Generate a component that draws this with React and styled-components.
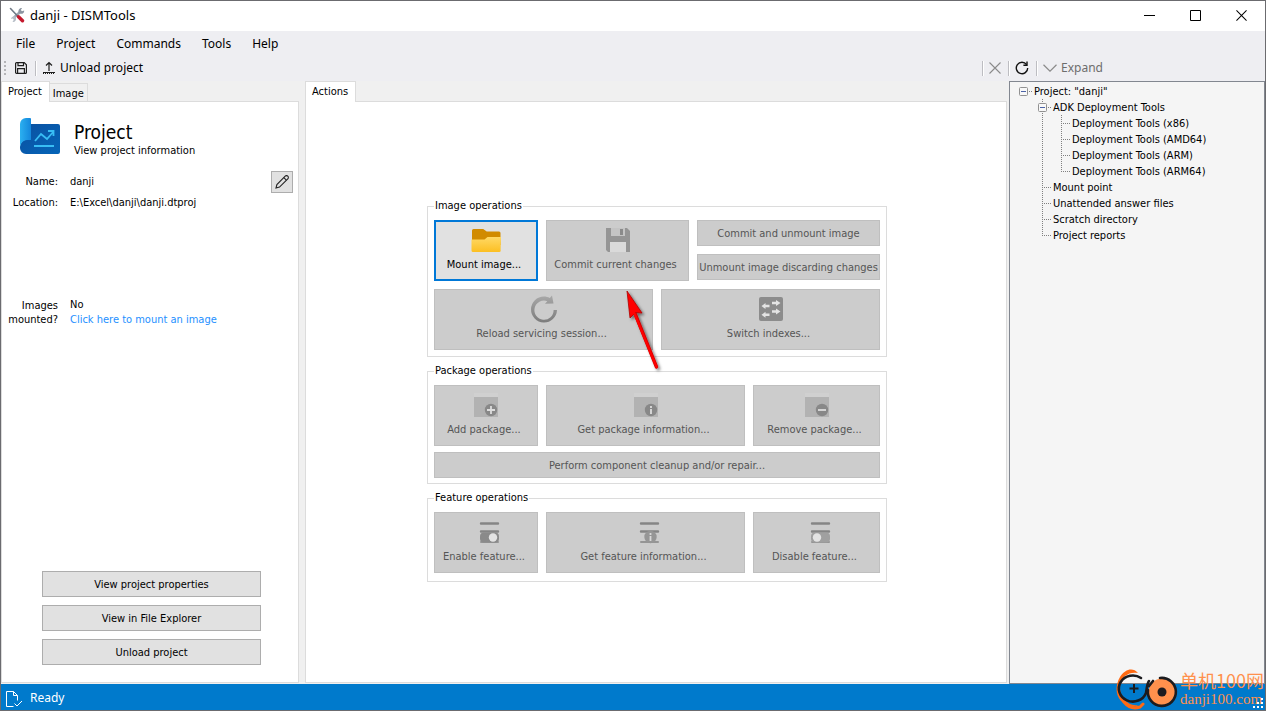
import React from 'react'
import styled, { createGlobalStyle, css } from 'styled-components'

const GlobalStyle = createGlobalStyle`
  * {
    box-sizing: border-box;
  }
  body {
    margin: 0;
    font-family: 'DejaVu Sans Condensed', 'DejaVu Sans', sans-serif;
    font-size: 11px;
    line-height: 14px;
    color: #000000;
  }
  button {
    font: inherit;
    color: inherit;
  }
`

const Window = styled.div`
  display: flex;
  flex-direction: column;
  position: relative;
  height: 100vh;
  overflow: hidden;
  background-color: #f0f0f0;
  border: 1px solid #6b6b6f;
`

const uiFont = css`
  font-family: 'Noto Sans', 'Noto Sans CJK SC', sans-serif;
  font-size: 12px;
  line-height: 16px;
`

const TitleBar = styled.header`
  ${uiFont}
  display: flex;
  height: 30px;
  padding: 0 1px 2px 8px;
  background-color: #ffffff;

  > svg {
    align-self: center;
  }
`

const Title = styled.h1`
  flex: 1;
  align-self: center;
  margin: 0 0 0 5px;
  font-size: 13px;
  font-weight: normal;
`

const CaptionButton = styled.button`
  display: flex;
  align-items: center;
  justify-content: center;
  width: 46px;
  padding: 0;
  border: none;
  background: none;
`

const MenuBar = styled.nav`
  ${uiFont}
  display: flex;
  gap: 1px;
  height: 26px;
  padding-left: 5px;
  background-color: #eeeef2;
`

const MenuItem = styled.button`
  padding: 0 10px;
  border: none;
  background: none;
`

const ToolBars = styled.div`
  ${uiFont}
  display: flex;
  height: 24px;
  background-color: #eeeef2;
`

const ToolBar = styled.div`
  display: flex;
  align-items: center;
  flex: ${(props) => (props.$width ? 'none' : 1)};
  width: ${(props) => props.$width || 'auto'};
  padding-bottom: 2px;
`

const ToolButton = styled.button`
  display: flex;
  align-items: center;
  gap: 4px;
  padding: 0 5px;
  border: none;
  background: none;
  white-space: nowrap;
  color: ${(props) => (props.disabled ? '#6d6d6d' : '#000000')};
`

const Separator = styled.span`
  width: 2px;
  height: 15px;
  margin-left: 2px;
  border-left: 1px solid #bdbdc2;
  background-color: #ffffff;
`

const Grip = styled.span`
  width: 2px;
  height: 14px;
  margin: 0 3px;
  background: repeating-linear-gradient(#b4b4b8 0 2px, transparent 2px 4px);
`

const Spacer = styled.span`
  flex: 1;
`

const Body = styled.main`
  display: flex;
  flex: 1;
  min-height: 0;
`

const TabPane = styled.section`
  display: flex;
  flex-direction: column;
  flex: ${(props) => (props.$width ? 'none' : 1)};
  width: ${(props) => props.$width || 'auto'};
  min-width: 0;
  margin-right: ${(props) => props.$gap};
  padding-bottom: 1px;
`

const TabStrip = styled.div`
  display: flex;
  align-items: flex-end;
  height: 20px;
`

const Tab = styled.button`
  height: ${(props) => (props.$active ? '21px' : '18px')};
  margin-bottom: ${(props) => (props.$active ? '-1px' : '0')};
  padding: ${(props) => (props.$active ? '0 7px 0 6px' : '2px 3px 0')};
  border: 1px solid #dcdcdc;
  border-bottom: none;
  border-left-width: ${(props) => (props.$active ? '1px' : '0')};
  background-color: ${(props) => (props.$active ? '#ffffff' : '#f0f0f0')};
  z-index: 1;
`

const TabPage = styled.div`
  display: flex;
  flex-direction: column;
  flex: 1;
  min-height: 0;
  border: 1px solid #dcdcdc;
  background-color: #ffffff;
`

const ProjectHeader = styled.div`
  display: flex;
  align-items: flex-start;
  gap: 14px;
  padding: 16px 18px 0;
`

const ProjectTitle = styled.h2`
  margin: 3px 0 1px;
  font-size: 19px;
  line-height: 22px;
  font-weight: normal;
`

const Details = styled.dl`
  display: grid;
  grid-template-columns: 56px 1fr 22px;
  gap: 3px 12px;
  align-items: center;
  margin: ${(props) => props.$top} 5px 0 0;
`

const Term = styled.dt`
  text-align: right;
`

const Value = styled.dd`
  margin: 0;
  grid-column: ${(props) => (props.$wide ? 'span 2' : 'auto')};
`

const MountLink = styled.a`
  display: block;
  margin-top: 1px;
  color: #1e90ff;
  text-decoration: none;
`

const Button = styled.button`
  height: 26px;
  padding: 1px 0 0;
  border: 1px solid #adadad;
  background-color: #e1e1e1;
  white-space: nowrap;

  &:disabled {
    border-color: #bfbfbf;
    background-color: #cccccc;
    color: #555555;
  }
`

const EditButton = styled(Button)`
  display: flex;
  align-items: center;
  justify-content: center;
  height: 22px;
  padding: 0;
`

const ProjectButtons = styled.div`
  display: flex;
  flex-direction: column;
  gap: 8px;
  margin: auto 37px 17px 40px;
`

const Operations = styled.div`
  position: relative;
  display: flex;
  flex-direction: column;
  gap: 7px;
  width: 462px;
  margin: auto;
  padding: 0 0 3px 2px;
`

const Group = styled.fieldset`
  margin: 0;
  padding: 7px 6px ${(props) => props.$bottom || '6px'};
  border: 1px solid #dcdcdc;
`

const Legend = styled.legend`
  padding: 0 1px;
`

const ButtonRow = styled.div`
  display: grid;
  grid-template-columns: ${(props) => props.$columns};
  gap: 8px;
  margin-top: ${(props) => props.$top || '0'};

  > * {
    min-width: 0;
  }
`

const ButtonStack = styled.div`
  display: flex;
  flex-direction: column;
  gap: 8px;
`

const BigButton = styled(Button)`
  display: flex;
  flex-direction: column;
  align-items: center;
  justify-content: space-between;
  height: 61px;
  padding: 4px 4px 8px 0;
  outline: ${(props) => (props.$focused ? '1px solid #0078d7' : 'none')};
  outline-offset: -2px;
  border-color: ${(props) => (props.$focused ? '#0078d7' : '#adadad')};

  svg {
    margin-left: 4px;
  }
`

const Arrow = styled.svg`
  position: absolute;
  left: 194px;
  top: 86px;
  pointer-events: none;
`

const Tree = styled.ul`
  flex: none;
  width: 256px;
  margin: 0;
  padding: 1px 0 0 4px;
  border: 1px solid #828790;
  background-color: #f5f5f5;
  list-style: none;
`

const TreeRow = styled.li`
  display: flex;
  align-items: center;
  height: 16px;
  white-space: nowrap;
`

const TreeLabel = styled.span`
  padding: 1px 0 0 1px;
`

const dots = (direction) =>
  `repeating-linear-gradient(${direction}, #808080 0 1px, transparent 1px 2px)`

const guides = {
  none: 'none',
  line: `${dots('to bottom')} 9px 0 / 1px 16px no-repeat`,
  tee: `${dots('to bottom')} 9px 0 / 1px 16px no-repeat, ${dots('to right')} 9px 8px / 9px 1px no-repeat`,
  elbow: `${dots('to bottom')} 9px 0 / 1px 8px no-repeat, ${dots('to right')} 9px 8px / 9px 1px no-repeat`,
  root: `${dots('to right')} 15px 8px / 3px 1px no-repeat`,
}

const Guide = styled.span`
  display: flex;
  align-items: center;
  justify-content: center;
  width: 19px;
  height: 16px;
  background: ${(props) => guides[props.$kind]};
`

const StatusBar = styled.footer`
  ${uiFont}
  display: flex;
  align-items: center;
  gap: 6px;
  height: 26px;
  padding: 2px 0 0 5px;
  background-color: #007acc;
  color: #ffffff;
`

const Watermark = styled.div`
  position: absolute;
  right: 1px;
  bottom: -2px;
  display: flex;
  align-items: center;
  gap: 2px;
  color: #ff914d;
`

const WatermarkText = styled.div`
  font-family: 'Liberation Serif', 'Noto Sans CJK SC', serif;
  font-size: 15px;
  line-height: 19px;
`

const WatermarkName = styled.div`
  font-family: 'Noto Sans CJK SC', sans-serif;
  font-size: 18px;
`

const SizeGrip = styled.svg`
  position: absolute;
  right: 2px;
  bottom: 2px;
`

const AppIcon = () => (
  <svg width="16" height="16" viewBox="0 0 16 16" fill="none">
    <path d="m5 10.500 5.500-5" stroke="#9aa4af" strokeWidth="2.400" />
    <path d="M9.500 5.500c-.6-2.600 1.200-4.700 3.600-4.500l-1.300 2L13 4.300l2.200-.9c.2 2.500-2 4-4 3.300z" fill="#8b95a1" />
    <path d="M6.500 9.500c-2-.8-4 .3-4.500 2.500l1.800-.5 1 1.300L3.500 15c2.500.3 4-1.800 3.500-4z" fill="#b4bcc5" />
    <path d="m1.500 1.500 7.500 8" stroke="#6f7985" strokeWidth="1.600" strokeLinecap="round" />
    <path d="m9.500 9.700 4 4" stroke="#c4182c" strokeWidth="3.400" strokeLinecap="round" />
  </svg>
)

const SaveIcon = () => (
  <svg width="14" height="14" viewBox="0 0 14 14" fill="none" stroke="#1e1e1e" strokeWidth="1.200">
    <path d="M1.600 2.600a1 1 0 0 1 1-1h7.600l2.200 2.200v7.600a1 1 0 0 1-1 1H2.600a1 1 0 0 1-1-1z" />
    <path d="M4 1.600v3h5.500v-3M3.600 12.400V7.600h6.800v4.800" />
  </svg>
)

const UnloadIcon = () => (
  <svg width="14" height="14" viewBox="0 0 14 14" fill="none" stroke="#1e1e1e">
    <path d="M7 10V1.500M4 4.500l3-3 3 3" strokeWidth="1.200" />
    <path d="M1 11.500h12" />
    <path d="M1 12.500h12" strokeDasharray="1 1" />
  </svg>
)

const CrossIcon = ({ size, color }) => (
  <svg width={size} height={size} viewBox="0 0 12 12" fill="none" stroke={color} strokeWidth="1.100">
    <path d="m.5.5 11 11m0-11-11 11" />
  </svg>
)

const RefreshIcon = () => (
  <svg width="14" height="14" viewBox="0 0 14 14" fill="none" stroke="#111111" strokeWidth="1.400">
    <path d="M11.600 3.600A5.700 5.700 0 1 0 12.700 7" />
    <path d="M12 .6v3.600H8.400" />
  </svg>
)

const ChevronIcon = () => (
  <svg width="14" height="8" viewBox="0 0 14 8" fill="none" stroke="#8a8a8a" strokeWidth="1.200">
    <path d="m.5.8 6.500 6.400L13.500.8" />
  </svg>
)

const ProjectIcon = () => (
  <svg width="40" height="36" viewBox="0 0 40 36">
    <defs>
      <linearGradient id="sheet" x1="0" y1="0" x2="1" y2="1">
        <stop offset="0" stopColor="#0b50a0" />
        <stop offset="1" stopColor="#0565b8" />
      </linearGradient>
      <linearGradient id="roll" x1="0" y1="0" x2="1" y2="0">
        <stop offset="0" stopColor="#2bb0f0" />
        <stop offset="1" stopColor="#1487dc" />
      </linearGradient>
    </defs>
    <path d="M5 22h6V6h27a2 2 0 0 1 2 2v26a2 2 0 0 1-2 2H6a6 6 0 0 1-6-6c0-4 2-8 5-8z" fill="url(#sheet)" />
    <path d="M0 30V6a6 6 0 0 1 6-6h4a1 1 0 0 1 1 1v21H7c-4 0-7 4-7 8z" fill="url(#roll)" />
    <path d="m15 23 6-7 6 5 7-8M28 13h5.500v5M14 28h20" fill="none" stroke="#38bdf4" strokeWidth="1.800" />
  </svg>
)

const PencilIcon = () => (
  <svg width="14" height="14" viewBox="0 0 14 14" fill="none" stroke="#222222" strokeWidth="1.100">
    <path d="M1 13l.9-3.500L10.200 1.200a1.800 1.800 0 0 1 2.600 2.600L4.500 12.100z" />
    <path d="m8.800 2.600 2.600 2.600" />
  </svg>
)

const FolderIcon = () => (
  <svg width="30" height="30" viewBox="0 0 30 30">
    <defs>
      <linearGradient id="folder" x1="0" y1="0" x2="0" y2="1">
        <stop offset="0" stopColor="#ffd965" />
        <stop offset="1" stopColor="#fcbf22" />
      </linearGradient>
    </defs>
    <path d="M1 5.500A1.500 1.500 0 0 1 2.500 4h9.700l3.500 2.500H28A1.500 1.500 0 0 1 29.500 8v12H1z" fill="#d18b00" />
    <path d="M.5 14.500h13l3-2.500H30l-.4 13a1.600 1.600 0 0 1-1.600 2H2a1.500 1.500 0 0 1-1.500-1.500z" fill="url(#folder)" />
  </svg>
)

const FloppyIcon = () => (
  <svg width="30" height="30" viewBox="0 0 30 30">
    <path d="M3 3h21l3 3v21H5l-2-2z" fill="#959595" />
    <path d="M8 3h14v8H8z" fill="#c4c4c4" />
    <path d="M17 4h3v6h-3z" fill="#8a8a8a" />
    <path d="M7 17h16v10H7z" fill="#dadada" />
  </svg>
)

const ReloadIcon = () => (
  <svg width="30" height="30" viewBox="0 0 30 30">
    <defs>
      <linearGradient id="reload" x1="0" y1="0" x2="0" y2="1">
        <stop offset="0" stopColor="#a8a8a8" />
        <stop offset="1" stopColor="#7c7c7c" />
      </linearGradient>
    </defs>
    <path
      d="M15 2.500c2 0 4 .5 5.800 1.500L23 1.500l1.500 8-8.500.3 2.300-2.600A9.600 9.600 0 1 0 24.600 16H28A13 13 0 1 1 15 2.500z"
      fill="url(#reload)"
    />
  </svg>
)

const SwitchIcon = () => (
  <svg width="30" height="30" viewBox="0 0 30 30">
    <rect x="3" y="3" width="24" height="24" rx="2" fill="#8c8c8c" />
    <path
      d="M16 7.800h4V6l4.500 3-4.500 3v-1.800h-4zM16 16.300h4v-1.800l4.500 3-4.500 3v-1.800h-4zM13.500 10.800h-4V9L5.500 12l4 3v-1.800h4zM13.500 19.600h-4v-1.800l-4 3 4 3V22h4z"
      fill="#e4e4e4"
    />
  </svg>
)

const PackageIcon = ({ mark }) => (
  <svg width="30" height="30" viewBox="0 0 30 30">
    <path d="M3 7V3h24v4z" fill="#d0d0d0" />
    <path d="M3 7h24v20H3z" fill="#b2b2b2" />
    <circle cx="20" cy="20" r="6.200" fill="#888888" />
    <path d={mark} stroke="#dddddd" strokeWidth="1.800" />
  </svg>
)

const FeatureIcon = ({ children }) => (
  <svg width="30" height="30" viewBox="0 0 30 30">
    <path d="M10 6.500h17M10 14.500h17" stroke="#858585" strokeWidth="2.400" strokeLinecap="round" />
    <path d="M10 25h17" stroke="#959595" strokeWidth="2" strokeLinecap="round" />
    {children}
  </svg>
)

const Toggle = ({ x, fill }) => (
  <>
    <rect x="9" y="15.500" width="19" height="10" rx="4" fill={fill} />
    <circle cx={x} cy="20.500" r="4.200" fill="#e3e3e3" />
  </>
)

const FeatureInfo = () => (
  <>
    <circle cx="19.500" cy="20" r="6.200" fill="#969696" />
    <path d="M19.500 16v2m0 1v5" stroke="#d8d8d8" strokeWidth="1.800" />
  </>
)

const ReadyIcon = () => (
  <svg width="18" height="17" viewBox="0 0 18 17" fill="none" stroke="#ffffff">
    <path d="M7.500 16.500h-7V1.500h7l4 4v5M7.500 1.500v4h4M8.500 13.500l2.500 2.500 5-5" />
  </svg>
)

const ExpanderIcon = () => (
  <svg width="9" height="9" viewBox="0 0 9 9">
    <rect x=".5" y=".5" width="8" height="8" rx="1" fill="#f8f8f8" stroke="#919191" />
    <path d="M2 4.500h5" stroke="#4b63a7" />
  </svg>
)

const WatermarkLogo = () => (
  <svg width="62" height="44" viewBox="0 0 62 44" fill="none">
    <path d="M22 5C17-1 9 1 4 9c-8 14-1 27 10 29 4 1 6 1 8-1-5 1-10-1-14-6C2 23 3 13 9 8c4-3 8-4 13-3z" fill="#ff6a13" />
    <path d="M8 34c4 5 10 7 16 5l3-3" stroke="#ff6a13" strokeWidth="3" strokeLinecap="round" />
    <path d="M25 10a14 13 0 1 0 5 15c1-6 1-9 3-12" stroke="#1b1b1f" strokeWidth="2.600" strokeLinecap="round" />
    <path d="M18 16v9M13.500 20.500h9" stroke="#1b1b1f" strokeWidth="2" />
    <circle cx="46" cy="24" r="13.500" fill="#ff914d" />
    <path d="M44 10a14 14 0 1 1-12 12M33 18l4-5" stroke="#1b1b1f" strokeWidth="2.600" strokeLinecap="round" />
    <circle cx="46" cy="24" r="4.500" fill="#1b1b1f" />
  </svg>
)

const treeRows = [
  { guides: ['root'], open: true, label: 'Project: "danji"' },
  { guides: ['none', 'tee'], open: true, label: 'ADK Deployment Tools' },
  { guides: ['none', 'line', 'tee'], label: 'Deployment Tools (x86)' },
  { guides: ['none', 'line', 'tee'], label: 'Deployment Tools (AMD64)' },
  { guides: ['none', 'line', 'tee'], label: 'Deployment Tools (ARM)' },
  { guides: ['none', 'line', 'elbow'], label: 'Deployment Tools (ARM64)' },
  { guides: ['none', 'tee'], label: 'Mount point' },
  { guides: ['none', 'tee'], label: 'Unattended answer files' },
  { guides: ['none', 'tee'], label: 'Scratch directory' },
  { guides: ['none', 'elbow'], label: 'Project reports' },
]

const ProjectPane = () => (
  <TabPane $width="298px" $gap="6px">
    <TabStrip>
      <Tab $active>Project</Tab>
      <Tab>Image</Tab>
    </TabStrip>
    <TabPage>
      <ProjectHeader>
        <ProjectIcon />
        <div>
          <ProjectTitle>Project</ProjectTitle>
          <div>View project information</div>
        </div>
      </ProjectHeader>
      <Details $top="13px">
        <Term>Name:</Term>
        <Value>danji</Value>
        <EditButton aria-label="Edit project name">
          <PencilIcon />
        </EditButton>
        <Term>Location:</Term>
        <Value $wide>E:\Excel\danji\danji.dtproj</Value>
      </Details>
      <Details $top="88px">
        <Term>Images mounted?</Term>
        <Value $wide>
          No
          <MountLink href="#mount">Click here to mount an image</MountLink>
        </Value>
      </Details>
      <ProjectButtons>
        <Button>View project properties</Button>
        <Button>View in File Explorer</Button>
        <Button>Unload project</Button>
      </ProjectButtons>
    </TabPage>
  </TabPane>
)

const ActionsPane = () => (
  <TabPane $gap="2px">
    <TabStrip>
      <Tab $active>Actions</Tab>
    </TabStrip>
    <TabPage>
      <Operations>
        <Group>
          <Legend>Image operations</Legend>
          <ButtonRow $columns="104fr 143fr 183fr">
            <BigButton $focused>
              <FolderIcon />
              Mount image...
            </BigButton>
            <BigButton disabled>
              <FloppyIcon />
              Commit current changes
            </BigButton>
            <ButtonStack>
              <Button disabled>Commit and unmount image</Button>
              <Button disabled>Unmount image discarding changes</Button>
            </ButtonStack>
          </ButtonRow>
          <ButtonRow $columns="1fr 1fr" $top="8px">
            <BigButton disabled>
              <ReloadIcon />
              Reload servicing session...
            </BigButton>
            <BigButton disabled>
              <SwitchIcon />
              Switch indexes...
            </BigButton>
          </ButtonRow>
        </Group>
        <Group $bottom="5px">
          <Legend>Package operations</Legend>
          <ButtonRow $columns="104fr 199fr 127fr">
            <BigButton disabled>
              <PackageIcon mark="M20 16v8M16 20h8" />
              Add package...
            </BigButton>
            <BigButton disabled>
              <PackageIcon mark="M20 16v2m0 1v5" />
              Get package information...
            </BigButton>
            <BigButton disabled>
              <PackageIcon mark="M16 20h8" />
              Remove package...
            </BigButton>
          </ButtonRow>
          <ButtonRow $columns="1fr" $top="6px">
            <Button disabled>Perform component cleanup and/or repair...</Button>
          </ButtonRow>
        </Group>
        <Group $bottom="8px">
          <Legend>Feature operations</Legend>
          <ButtonRow $columns="104fr 199fr 127fr">
            <BigButton disabled>
              <FeatureIcon>
                <Toggle x="22" fill="#8a8a8a" />
              </FeatureIcon>
              Enable feature...
            </BigButton>
            <BigButton disabled>
              <FeatureIcon>
                <FeatureInfo />
              </FeatureIcon>
              Get feature information...
            </BigButton>
            <BigButton disabled>
              <FeatureIcon>
                <Toggle x="15" fill="#a0a0a0" />
              </FeatureIcon>
              Disable feature...
            </BigButton>
          </ButtonRow>
        </Group>
        <Arrow width="50" height="92" viewBox="0 0 50 92">
          <defs>
            <filter id="shade" x="-40%" y="-20%" width="180%" height="140%">
              <feDropShadow dx="2" dy="2" stdDeviation="1.500" floodColor="#000000" floodOpacity="0.500" />
            </filter>
          </defs>
          <g filter="url(#shade)">
            <path d="M15 26 37.500 82" stroke="#d00000" strokeWidth="3.400" strokeLinecap="round" />
            <path d="M8 6 23 28l-6.500-.5L11 33z" fill="#ff0000" stroke="#b00000" strokeWidth=".8" />
            <path d="M14 25 37.500 82" stroke="#ff0000" strokeWidth="2.200" strokeLinecap="round" />
          </g>
        </Arrow>
      </Operations>
    </TabPage>
  </TabPane>
)

const App = () => (
  <>
    <GlobalStyle />
    <Window>
      <TitleBar>
        <AppIcon />
        <Title>danji - DISMTools</Title>
        <CaptionButton aria-label="Minimize">
          <svg width="11" height="11" stroke="#000000">
            <path d="M0 5.500h11" />
          </svg>
        </CaptionButton>
        <CaptionButton aria-label="Maximize">
          <svg width="11" height="11" stroke="#000000" fill="none">
            <path d="M.5.5h10v10H.5z" />
          </svg>
        </CaptionButton>
        <CaptionButton aria-label="Close">
          <CrossIcon size={11} color="#000000" />
        </CaptionButton>
      </TitleBar>
      <MenuBar>
        <MenuItem>File</MenuItem>
        <MenuItem>Project</MenuItem>
        <MenuItem>Commands</MenuItem>
        <MenuItem>Tools</MenuItem>
        <MenuItem>Help</MenuItem>
      </MenuBar>
      <ToolBars>
        <ToolBar>
          <Grip />
          <ToolButton aria-label="Save project">
            <SaveIcon />
          </ToolButton>
          <Separator />
          <ToolButton>
            <UnloadIcon />
            Unload project
          </ToolButton>
          <Spacer />
          <Separator />
          <ToolButton aria-label="Close pane" disabled>
            <CrossIcon size={12} color="#8a8a8a" />
          </ToolButton>
        </ToolBar>
        <ToolBar $width="259px">
          <Separator />
          <ToolButton aria-label="Reload tree">
            <RefreshIcon />
          </ToolButton>
          <Separator />
          <ToolButton disabled>
            <ChevronIcon />
            Expand
          </ToolButton>
        </ToolBar>
      </ToolBars>
      <Body>
        <ProjectPane />
        <ActionsPane />
        <Tree>
          {treeRows.map((row) => (
            <TreeRow key={row.label}>
              {row.guides.map((kind, i) => (
                <Guide key={i} $kind={kind}>
                  {row.open && i === row.guides.length - 1 && <ExpanderIcon />}
                </Guide>
              ))}
              <TreeLabel>{row.label}</TreeLabel>
            </TreeRow>
          ))}
        </Tree>
      </Body>
      <StatusBar>
        <ReadyIcon />
        Ready
      </StatusBar>
      <Watermark>
        <WatermarkLogo />
        <WatermarkText>
          <WatermarkName>单机100网</WatermarkName>
          danji100.com
        </WatermarkText>
      </Watermark>
      <SizeGrip width="10" height="10" fill="#ffffff">
        <path d="M8 0h2v2H8zM4 4h2v2H4zM8 4h2v2H8zM0 8h2v2H0zM4 8h2v2H4zM8 8h2v2H8z" />
      </SizeGrip>
    </Window>
  </>
)

export default App
